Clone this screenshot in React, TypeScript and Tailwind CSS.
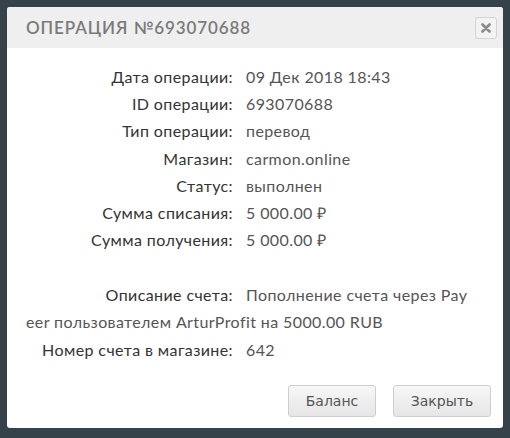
import React from "react";

const rows: [string, string][] = [
  ["Дата операции:", "09 Дек 2018 18:43"],
  ["ID операции:", "693070688"],
  ["Тип операции:", "перевод"],
  ["Магазин:", "carmon.online"],
  ["Статус:", "выполнен"],
  ["Сумма списания:", "5 000.00 ₽"],
  ["Сумма получения:", "5 000.00 ₽"],
];

function Row({ label, value }: { label: string; value: string }) {
  return (
    <div className="flex h-[27.3px] items-center whitespace-nowrap">
      <div className="w-[207px] shrink-0 text-right text-[#333]">{label}</div>
      <div className="pl-[13px] text-[#555]">{value}</div>
    </div>
  );
}

export default function App() {
  return (
    <div className="h-[438px] w-[510px] bg-[#36424a] p-[7px]" style={{ fontFamily: "Lato, 'Open Sans', sans-serif" }}>
      <div className="flex h-[421px] flex-col overflow-hidden rounded-[3px] bg-white">
        <div className="flex h-[41px] items-center justify-between bg-[#efefef] pl-[19px] pr-[6px]">
          <div className="text-[17px] font-semibold uppercase tracking-[0.9px] text-[#7a7a7a]">Операция №693070688</div>
          <button className="flex h-[22px] w-[22px] items-center justify-center rounded-[3px] border border-[#d4d4d4] bg-[#f3f3f3]">
            <svg width="10" height="10" viewBox="0 0 10 10">
              <path d="M1.5 1.5 L8.5 8.5 M8.5 1.5 L1.5 8.5" stroke="#8a8a8a" strokeWidth="2.6" strokeLinecap="round" />
            </svg>
          </button>
        </div>
        <div className="pl-[19px] pt-[15px] text-[16px] tracking-[0.4px]">
          {rows.map(([l, v]) => (
            <Row key={l} label={l} value={v} />
          ))}
          <div className="h-[27.3px]" />
          <Row label="Описание счета:" value="Пополнение счета через Pay" />
          <div className="flex h-[27.3px] items-center whitespace-nowrap text-[#555]">eer пользователем ArturProfit на 5000.00 RUB</div>
          <Row label="Номер счета в магазине:" value="642" />
        </div>
        <div className="mt-auto flex justify-end gap-[17px] pb-[11px] pr-[12px]" style={{ fontFamily: "'DejaVu Sans', Verdana, sans-serif" }}>
          <button className="h-[32px] w-[88px] rounded-[3px] border border-[#cfcfcf] bg-gradient-to-b from-[#f7f7f7] to-[#e6e6e6] text-[14px] text-[#555]">Баланс</button>
          <button className="h-[32px] w-[98px] rounded-[3px] border border-[#cfcfcf] bg-gradient-to-b from-[#f7f7f7] to-[#e6e6e6] text-[14px] text-[#555]">Закрыть</button>
        </div>
      </div>
    </div>
  );
}
